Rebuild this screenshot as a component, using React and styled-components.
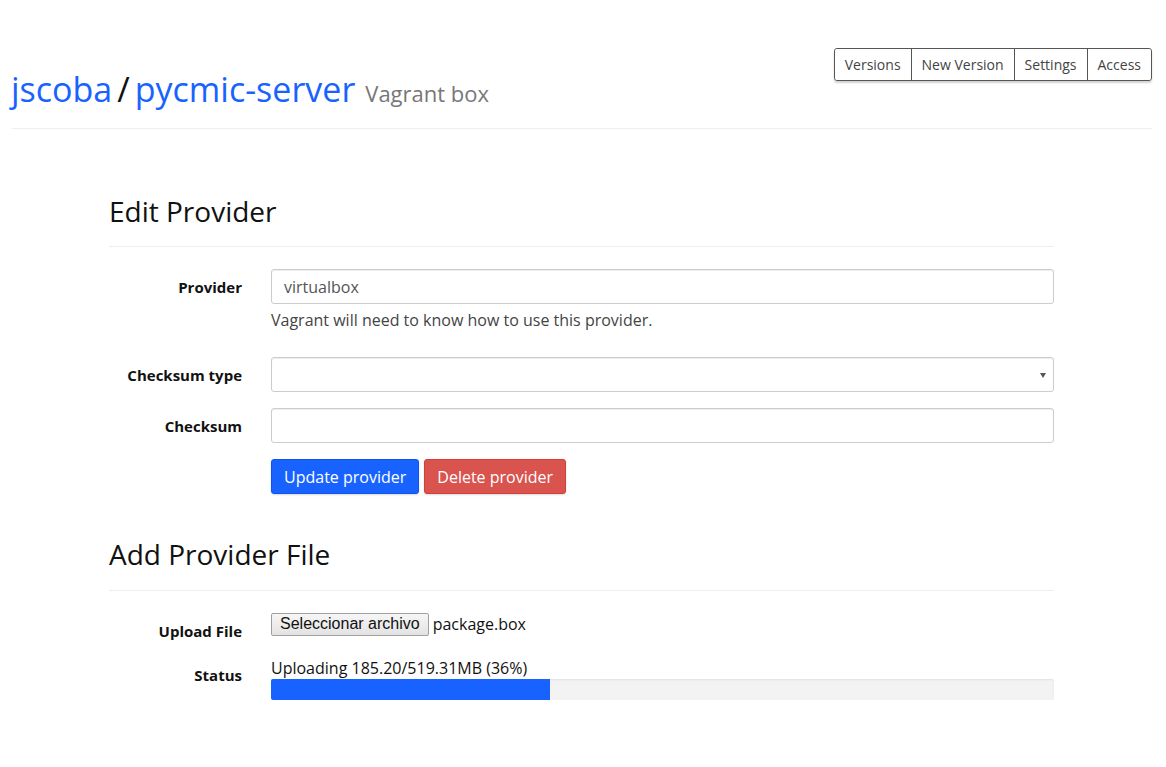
import styled, { createGlobalStyle } from 'styled-components';

const GlobalStyle = createGlobalStyle`
  body {
    margin: 0;
    background: #fff;
    font-family: "Open Sans", "Liberation Sans", sans-serif;
    font-size: 16px;
    color: #333;
  }
`;

const BLUE = '#1863ff';

const sent = 185.2;
const total = 519.31;

export default function App() {
  const pct = (sent / total) * 100;

  return (
    <>
      <GlobalStyle />
      <Page>
        <Header>
          <Title>
            <Crumb>jscoba</Crumb>
            <Slash>/</Slash>
            <Crumb>pycmic-server</Crumb>
            <Kind>Vagrant box</Kind>
          </Title>
          <BtnGroup>
            <GroupBtn>Versions</GroupBtn>
            <GroupBtn>New Version</GroupBtn>
            <GroupBtn>Settings</GroupBtn>
            <GroupBtn>Access</GroupBtn>
          </BtnGroup>
        </Header>

        <Section>
          <SectionTitle>Edit Provider</SectionTitle>
          <Form>
            <Label>Provider</Label>
            <Field>
              <TextInput defaultValue="virtualbox" />
              <Help>Vagrant will need to know how to use this provider.</Help>
            </Field>

            <Label>Checksum type</Label>
            <Field>
              <SelectWrap>
                <Select defaultValue="">
                  <option value=""></option>
                  <option value="md5">md5</option>
                  <option value="sha1">sha1</option>
                  <option value="sha256">sha256</option>
                </Select>
              </SelectWrap>
            </Field>

            <Label>Checksum</Label>
            <Field>
              <TextInput />
            </Field>

            <span />
            <Field>
              <Actions>
                <Btn $color={BLUE} $border="#0d55ee">Update provider</Btn>
                <Btn $color="#d9534f" $border="#d43f3a">Delete provider</Btn>
              </Actions>
            </Field>
          </Form>

          <SectionTitle $top="45px" $pad="20px">Add Provider File</SectionTitle>
          <Form $gap="15px">
            <Label>Upload File</Label>
            <Field>
              <FileRow>
                <FileBtn>Seleccionar archivo</FileBtn>
                <FileName>package.box</FileName>
              </FileRow>
            </Field>

            <Label>Status</Label>
            <Field>
              <StatusText>Uploading {sent.toFixed(2)}/{total}MB (36%)</StatusText>
              <Progress>
                <ProgressFill style={{ width: `${pct}%` }} />
              </Progress>
            </Field>
          </Form>
        </Section>
      </Page>
    </>
  );
}

const Page = styled.div`
  width: 1140px;
  margin-left: 12px;
  padding-bottom: 60px;
`;

const Header = styled.div`
  display: flex;
  justify-content: space-between;
  align-items: flex-start;
  padding-bottom: 20px;
  border-bottom: 1px solid #eee;
`;

const Title = styled.h1`
  margin: 71px 0 0 -1px;
  font-size: 34px;
  line-height: 1.1;
  font-weight: 400;
  display: flex;
  align-items: baseline;
`;

const Crumb = styled.span`
  color: ${BLUE};
`;

const Slash = styled.span`
  color: #111;
  margin: 0 5px;
`;

const Kind = styled.small`
  font-size: 22px;
  color: #777;
  margin-left: 10px;
`;

const BtnGroup = styled.div`
  display: flex;
  margin-top: 48px;
  border: 1px solid #555;
  border-radius: 3px;
  box-shadow: 0 2px 2px rgba(0, 0, 0, 0.18);
`;

const GroupBtn = styled.button`
  font-family: "Open Sans", sans-serif;
  font-size: 14px;
  color: #444;
  background: #fff;
  border: none;
  border-left: 1px solid #555;
  padding: 0 10px;
  height: 31px;
  cursor: pointer;
  &:first-child {
    border-left: none;
    border-radius: 3px 0 0 3px;
  }
  &:last-child {
    border-radius: 0 3px 3px 0;
  }
`;

const Section = styled.div`
  width: 945px;
  margin-left: 97px;
`;

const SectionTitle = styled.h2`
  margin: ${({ $top }) => $top || '67px'} 0 22px;
  padding-bottom: ${({ $pad }) => $pad || '19px'};
  border-bottom: 1px solid #eee;
  font-size: 28px;
  line-height: 1.1;
  font-weight: 400;
  color: #111;
`;

const Form = styled.div`
  display: grid;
  grid-template-columns: 162px 1fr;
  row-gap: ${({ $gap }) => $gap || '16px'};
`;

const Label = styled.label`
  font-weight: 700;
  font-size: 15px;
  line-height: 22px;
  color: #111;
  text-align: right;
  padding: 7px 29px 0 0;
`;

const Field = styled.div`
  display: flex;
  flex-direction: column;
`;

const TextInput = styled.input`
  box-sizing: border-box;
  height: 35px;
  width: 100%;
  padding: 6px 12px;
  font-family: "Open Sans", sans-serif;
  font-size: 16px;
  color: #555;
  border: 1px solid #ccc;
  border-radius: 3px;
  box-shadow: inset 0 1px 1px rgba(0, 0, 0, 0.075);
  outline: none;
`;

const Help = styled.p`
  margin: 5px 0 10px;
  font-size: 16px;
  line-height: 22px;
  color: #444;
`;

const SelectWrap = styled.div`
  position: relative;
  &::after {
    content: '';
    position: absolute;
    right: 8px;
    top: 16px;
    border-left: 3px solid transparent;
    border-right: 3px solid transparent;
    border-top: 5px solid #555;
    pointer-events: none;
  }
`;

const Select = styled.select`
  appearance: none;
  box-sizing: border-box;
  width: 100%;
  height: 35px;
  padding: 6px 12px;
  font-family: "Open Sans", sans-serif;
  font-size: 16px;
  color: #555;
  background: #fff;
  border: 1px solid #ccc;
  border-radius: 3px;
  box-shadow: inset 0 1px 1px rgba(0, 0, 0, 0.075);
  outline: none;
`;

const Actions = styled.div`
  display: flex;
  gap: 5px;
`;

const Btn = styled.button`
  height: 35px;
  padding: 0 12px;
  font-family: "Open Sans", sans-serif;
  font-size: 16px;
  color: #fff;
  background: ${({ $color }) => $color};
  border: 1px solid ${({ $border }) => $border};
  border-radius: 3px;
  box-shadow: 0 1px 2px rgba(0, 0, 0, 0.15);
  cursor: pointer;
`;

const FileRow = styled.div`
  display: flex;
  align-items: center;
  gap: 4px;
  height: 23px;
`;

const FileBtn = styled.button`
  box-sizing: border-box;
  height: 23px;
  padding: 0 8px;
  font-family: "Liberation Sans", Arial, sans-serif;
  font-size: 16px;
  color: #111;
  background: linear-gradient(#f6f6f6, #e3e3e3);
  border: 1px solid #a0a0a0;
  border-radius: 2px;
`;

const FileName = styled.span`
  font-size: 16px;
  color: #111;
`;

const StatusText = styled.div`
  font-size: 16px;
  line-height: 22px;
  color: #111;
`;

const Progress = styled.div`
  height: 21px;
  background: #f3f3f3;
  border-radius: 2px;
  box-shadow: inset 0 1px 2px rgba(0, 0, 0, 0.08);
  overflow: hidden;
`;

const ProgressFill = styled.div`
  height: 100%;
  background: ${BLUE};
`;
